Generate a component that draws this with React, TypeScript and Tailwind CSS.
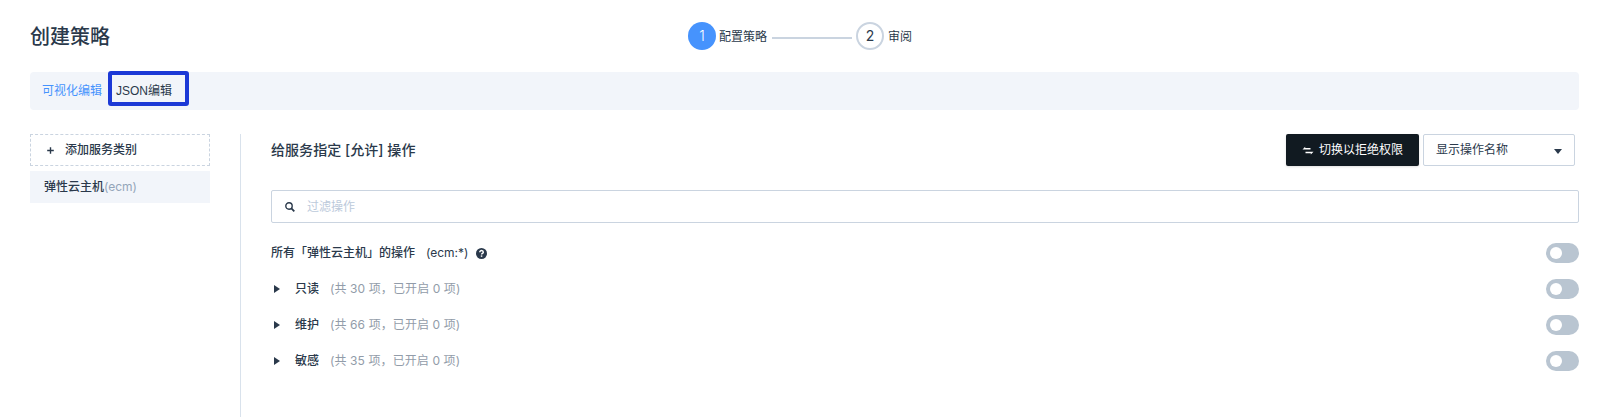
import React from 'react';

function Toggle() {
  return (
    <button
      type="button"
      role="switch"
      aria-checked="false"
      className="flex h-5 w-[33px] items-center rounded-full bg-[#b9c5d1] pl-1"
    >
      <span className="h-3 w-3 rounded-full bg-white" />
    </button>
  );
}

const groups = [
  { name: '只读', total: 30, on: 0 },
  { name: '维护', total: 66, on: 0 },
  { name: '敏感', total: 35, on: 0 },
];

export default function App() {
  return (
    <div className="h-[417px] overflow-hidden bg-white pr-[35px] pl-[30px] font-['Inter','Noto_Sans_CJK_SC',sans-serif] text-xs text-[#2a394b]">
      <header className="flex h-[72px] items-center">
        <h1 className="w-[658px] pt-0.5 text-[20px] leading-none font-medium">创建策略</h1>
        <div className="flex items-center leading-none">
          <span className="flex h-7 w-7 items-center justify-center rounded-full bg-[#4693fd] text-sm font-light text-white">1</span>
          <span className="ml-[3px] w-[53px] pt-0.5">配置策略</span>
          <span className="mt-1 h-0.5 w-20 bg-[#cad4e0]" />
          <span className="ml-1 flex h-7 w-7 items-center justify-center rounded-full border-2 border-[#cad4e0] text-sm">2</span>
          <span className="ml-1 pt-0.5">审阅</span>
        </div>
      </header>

      <nav className="flex h-[38px] items-center rounded-sm bg-[#f2f5fa] pl-3">
        <span className="w-[66px] text-[#4693fd]">可视化编辑</span>
        <span className="mb-[5px] flex h-[35px] w-[81px] items-center rounded-[3px] border-4 border-[#1c39d6] pt-[5px] pl-[4px] font-['Liberation_Sans','Noto_Sans_CJK_SC',sans-serif]">
          JSON编辑
        </span>
      </nav>

      <div className="mt-6 flex h-[283px]">
        <aside className="w-[180px] shrink-0">
          <button type="button" className="flex h-8 w-full items-center border border-dashed border-[#cad4e0] pl-[15px] font-medium">
            <svg className="mr-[10px] h-[9px] w-[9px]" viewBox="0 0 9 9">
              <path d="M1.2 4.5h6.6M4.5 1.2v6.6" stroke="#2a394b" strokeWidth="1.4" />
            </svg>
            添加服务类别
          </button>
          <div className="mt-[5px] flex h-8 items-center bg-[#f2f5fa] pl-[14px]">
            <span className="font-medium">弹性云主机</span>
            <span className="text-[#94a5b9]">(ecm)</span>
          </div>
        </aside>

        <main className="ml-[30px] flex-1 border-l border-[#d9e2ec] pl-[30px]">
          <div className="flex h-8 items-center pr-1">
            <h2 className="flex-1 text-sm font-medium tracking-[0.05px]">给服务指定 [允许] 操作</h2>
            <button type="button" className="flex h-8 w-[133px] items-center rounded-xs bg-[#111a21] pl-4 text-white shadow-sm">
              <svg className="mr-[5px] h-[9px] w-[12px]" viewBox="0 0 12 9" fill="white">
                <path d="M.5 3.5 3.2.8v1.1h5.3v1.6zM11.5 5.7 8.8 8.4V7.3H3.5V5.7z" />
              </svg>
              切换以拒绝权限
            </button>
            <button type="button" className="ml-1 flex h-8 w-[152px] items-center justify-between rounded-xs border border-[#cad4e0] pr-3 pl-3">
              显示操作名称
              <svg className="mt-[3px] h-[5px] w-2" viewBox="0 0 8 5">
                <path d="M0 0h8L4 5z" fill="#2a394b" />
              </svg>
            </button>
          </div>

          <div className="mt-6 flex h-[33px] items-center rounded-xs border border-[#cad4e0] pl-[13px]">
            <svg className="mr-3 h-[10px] w-[10px]" viewBox="0 0 10 10" fill="none" stroke="#2a394b">
              <circle cx="4" cy="4" r="3.2" strokeWidth="1.4" />
              <path d="m6.4 6.4 2.9 2.9" strokeWidth="1.8" />
            </svg>
            <span className="text-[#bccadb]">过滤操作</span>
          </div>

          <div className="mt-5 flex h-5 items-center">
            <span className="font-medium">所有「弹性云主机」的操作</span>
            <span className="ml-[11px]">(ecm:*)</span>
            <svg className="ml-2 h-[11px] w-[11px]" viewBox="0 0 11 11">
              <circle cx="5.5" cy="5.5" r="5.5" fill="#2a394b" />
              <path d="M3.8 4.3c0-2.3 3.5-2.2 3.5 0 0 1.2-1.7 1.1-1.7 2.3" fill="none" stroke="white" strokeWidth="1.5" />
              <path d="M4.8 7.4h1.5v1.4H4.8z" fill="white" />
            </svg>
            <div className="ml-auto"><Toggle /></div>
          </div>

          {groups.map((g) => (
            <div key={g.name} className="mt-4 flex h-5 items-center">
              <svg className="ml-[3px] h-2 w-[6px]" viewBox="0 0 6 8">
                <path d="M0 0 6 4 0 8z" fill="#2a394b" />
              </svg>
              <span className="ml-[15px] w-[35px] font-medium">{g.name}</span>
              <span className="tracking-[0.1px] text-[#929ca9]">
                (共 {g.total} 项，已开启 {g.on} 项)
              </span>
              <div className="ml-auto"><Toggle /></div>
            </div>
          ))}
        </main>
      </div>
    </div>
  );
}
